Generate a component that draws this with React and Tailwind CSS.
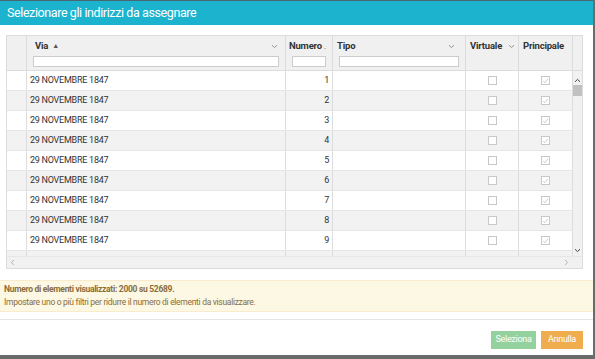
import React from "react";

const font = { fontFamily: "Roboto, 'Noto Sans', sans-serif" };

function Chevron({ className = "" }) {
  return (
    <svg width="7" height="5" viewBox="0 0 7 5" className={className}>
      <path d="M1 1.2 L3.5 3.6 L6 1.2" fill="none" stroke="#888" strokeWidth="0.9" />
    </svg>
  );
}

function Check({ checked }) {
  return (
    <div className="w-[9px] h-[9px] border border-[#c8c8c8] bg-white flex items-center justify-center">
      {checked && (
        <svg width="8" height="8" viewBox="0 0 8 8">
          <path d="M1.3 4.2 L3.2 6 L6.8 1.8" fill="none" stroke="#bdbdbd" strokeWidth="0.9" />
        </svg>
      )}
    </div>
  );
}

const rows = [1, 2, 3, 4, 5, 6, 7, 8, 9, 10];

export default function App() {
  return (
    <div className="w-[595px] h-[359px] bg-[#6b6b6b] overflow-hidden" style={font}>
      <div className="w-[593px] h-[355px] bg-white flex flex-col">
        <div className="h-[25px] bg-[#1cb3cf] flex items-center pl-[7px] border-t border-[#4a6670]">
          <span className="text-white text-[12.5px] leading-none tracking-[-0.4px]">Selezionare gli indirizzi da assegnare</span>
        </div>

        <div className="pt-[10px] pl-[6px]">
          <div className="w-[577px] border border-[#dcdcdc] text-[#333]">
            {/* header */}
            <div className="flex h-[35px] bg-[#f0f0f0] border-b border-[#dcdcdc] text-[9.5px] font-bold text-[#333] tracking-[-0.2px]">
              <div className="w-[20px] border-r border-[#dcdcdc]" />
              <div className="w-[259px] border-r border-[#dcdcdc] flex flex-col px-[6px] pt-[4px]">
                <div className="flex items-center h-[12px] pl-[2px]">
                  <span>Via</span>
                  <span className="ml-[4px] text-[7px] text-[#555]">▲</span>
                  <Chevron className="ml-auto mr-[1px]" />
                </div>
                <div className="mt-[4px] h-[11px] bg-white border border-[#ccc]" />
              </div>
              <div className="w-[47px] border-r border-[#dcdcdc] flex flex-col px-[6px] pt-[4px]">
                <div className="flex items-center h-[12px] -ml-[3px] whitespace-nowrap">
                  <span>Numero</span>
                  <svg width="5" height="5" viewBox="0 0 5 5" className="ml-[1px]">
                    <path d="M0.8 1.5 L2.5 3.2 L4.2 1.5" fill="none" stroke="#888" strokeWidth="0.8" />
                  </svg>
                  <span className="font-normal text-[#666]">.</span>
                </div>
                <div className="mt-[4px] h-[11px] bg-white border border-[#ccc]" />
              </div>
              <div className="w-[133px] border-r border-[#dcdcdc] flex flex-col px-[6px] pt-[4px]">
                <div className="flex items-center h-[12px] -ml-[2px]">
                  <span>Tipo</span>
                  <Chevron className="ml-auto mr-[4px]" />
                </div>
                <div className="mt-[4px] h-[11px] bg-white border border-[#ccc]" />
              </div>
              <div className="w-[53px] border-r border-[#dcdcdc] flex flex-col pl-[4px] pt-[4px]">
                <div className="flex items-center h-[12px]">
                  <span>Virtuale</span>
                  <Chevron className="ml-[6px]" />
                </div>
              </div>
              <div className="w-[54px] border-r border-[#dcdcdc] flex flex-col pl-[4px] pt-[4px]">
                <div className="flex items-center h-[12px]">
                  <span>Principale</span>
                </div>
              </div>
              <div className="flex-1" />
            </div>

            {/* body */}
            <div className="flex h-[185px] overflow-hidden">
              <div className="w-[566px] flex flex-col text-[9px] tracking-[-0.25px] text-[#333]">
                {rows.map((n) => (
                  <div
                    key={n}
                    className={`flex h-[20px] shrink-0 border-b border-[#e6e6e6] ${n % 2 === 0 ? "bg-[#f2f2f2]" : "bg-white"}`}
                  >
                    <div className="w-[20px] border-r border-[#dcdcdc]" />
                    <div className="w-[259px] border-r border-[#dcdcdc] flex items-center pl-[3px]">29 NOVEMBRE 1847</div>
                    <div className="w-[47px] border-r border-[#dcdcdc] flex items-center justify-end pr-[3px]">{n}</div>
                    <div className="w-[133px] border-r border-[#dcdcdc]" />
                    <div className="w-[53px] border-r border-[#dcdcdc] flex items-center justify-center">
                      <Check />
                    </div>
                    <div className="w-[54px] border-r border-[#dcdcdc] flex items-center justify-center">
                      <Check checked />
                    </div>
                  </div>
                ))}
              </div>
              <div className="w-[11px] bg-[#f1f1f1] flex flex-col items-center">
                <svg width="7" height="5" viewBox="0 0 7 5" className="mt-[7px]">
                  <path d="M1 3.8 L3.5 1.4 L6 3.8" fill="none" stroke="#444" strokeWidth="1" />
                </svg>
                <div className="mt-[2px] w-[9px] h-[11px] bg-[#c1c1c1]" />
                <svg width="7" height="5" viewBox="0 0 7 5" className="mt-auto mb-[3px]">
                  <path d="M1 1.2 L3.5 3.6 L6 1.2" fill="none" stroke="#444" strokeWidth="1" />
                </svg>
              </div>
            </div>

            {/* horizontal scrollbar */}
            <div className="h-[12px] bg-[#f1f1f1] flex items-center px-[3px] border-t border-[#e6e6e6]">
              <svg width="5" height="7" viewBox="0 0 5 7">
                <path d="M3.8 1 L1.4 3.5 L3.8 6" fill="none" stroke="#aaa" strokeWidth="0.9" />
              </svg>
              <svg width="5" height="7" viewBox="0 0 5 7" className="ml-auto mr-[10px]">
                <path d="M1.2 1 L3.6 3.5 L1.2 6" fill="none" stroke="#aaa" strokeWidth="0.9" />
              </svg>
            </div>
          </div>
        </div>

        <div className="mt-[11px] h-[32px] bg-[#fcf8e3] border-t border-b border-[#faebcc] text-[#8a6d3b] text-[8.5px] tracking-[-0.3px] px-[4px] flex flex-col justify-center leading-[13px]">
          <div className="font-bold">Numero di elementi visualizzati: 2000 su 52689.</div>
          <div>Impostare uno o più filtri per ridurre il numero di elementi da visualizzare.</div>
        </div>

        <div className="mt-[7px] border-t border-[#e5e5e5] flex justify-end gap-[5px] pt-[11px] pr-[10px]">
          <div className="h-[18px] w-[45px] bg-[#93d19f] text-white text-[9px] tracking-[-0.3px] flex items-center justify-center">Seleziona</div>
          <div className="h-[18px] w-[42px] bg-[#f0ad4e] text-white text-[9px] tracking-[-0.3px] flex items-center justify-center">Annulla</div>
        </div>
      </div>
    </div>
  );
}
